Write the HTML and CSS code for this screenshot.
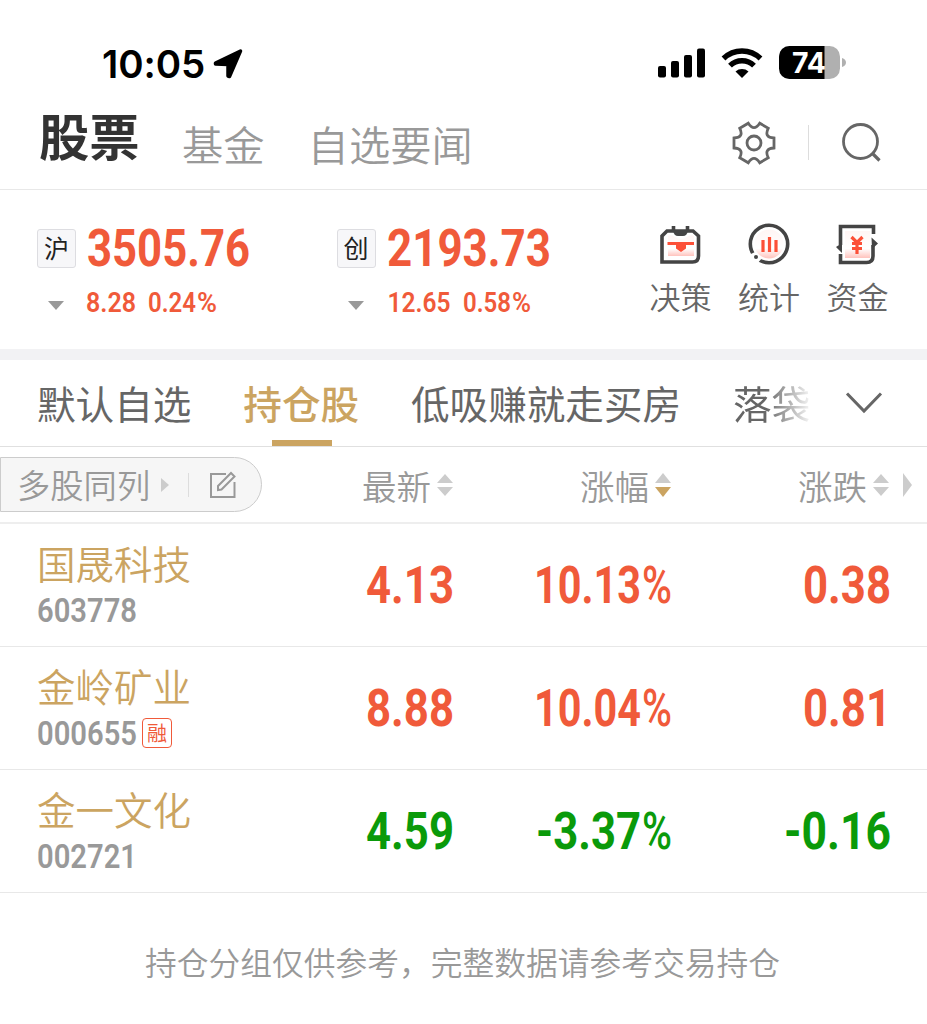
FILE: index.html
```html
<!DOCTYPE html>
<html lang="zh-CN">
<head>
<meta charset="utf-8">
<title>股票</title>
<link rel="stylesheet" href="styles.css">
</head>
<body>
<div class="status">
  <span class="time">10:05</span>
  <svg class="locate" width="32" height="32" viewBox="0 0 32 32"><path d="M28.500 3L17.500 28.500L16 28V16.500L3.500 16V15Z"/></svg>
  <svg class="signal" width="48" height="30" viewBox="0 0 48 30"><rect x="0" y="18" width="8" height="11.500" rx="2"/><rect x="13" y="13" width="8" height="16.500" rx="2"/><rect x="26" y="7" width="8" height="22.500" rx="2"/><rect x="39" y="0.500" width="8" height="29" rx="2"/></svg>
  <svg class="wifi" width="42" height="32" viewBox="0 0 42 32"><path d="M2.500 11.500A26.500 26.500 0 0 1 39.500 11.500M9 18.700A17 17 0 0 1 33 18.700" fill="none" stroke="#000" stroke-width="5.400"/><path d="M14.500 24.500A10 10 0 0 1 27.500 24.500L21 31Z"/></svg>
  <svg class="battery" width="68" height="34" viewBox="0 0 68 34"><defs><clipPath id="cell"><rect width="61" height="33" rx="10.500"/></clipPath></defs><g clip-path="url(#cell)"><rect width="61" height="33" fill="#b0b0b0"/><rect width="45.500" height="33"/></g><path d="M63 12C68.300 13 68.300 20 63 21Z" fill="#b0b0b0"/><text x="13" y="27" textLength="34" lengthAdjust="spacingAndGlyphs">74</text></svg>
</div>
<nav class="nav">
  <span class="nav-main">股票</span>
  <span class="nav-item">基金</span>
  <span class="nav-item">自选要闻</span>
  <svg class="gear" width="46" height="46" viewBox="-23 -23 46 46"><path d="M20-5V5Q9.650 5.500 14.300 14.800L5.700 19.800Q0 11-5.700 19.800L-14.300 14.800Q-9.650 5.500-20 5V-5Q-9.650-5.500-14.300-14.800L-5.700-19.800Q0-11 5.700-19.800L14.300-14.800Q9.650-5.500 20-5Z"/><circle r="7"/></svg>
  <i class="nav-rule"></i>
  <svg class="search" width="42" height="42" viewBox="0 0 42 42"><circle cx="19.500" cy="19.500" r="17"/><path d="M31.500 31.500L38.500 38.500" stroke-width="3.200"/></svg>
</nav>
<section class="market">
  <div class="index">
    <b class="badge">沪</b>
    <svg class="quote" width="166" height="44"><text x="0" y="40" textLength="163" lengthAdjust="spacingAndGlyphs">3505.76</text></svg>
    <svg class="fall" width="18" height="10"><path d="M1 0H17L9 9Z"/></svg>
    <svg class="change" width="150" height="26"><text x="-1" y="23" textLength="50" lengthAdjust="spacingAndGlyphs">8.28</text><text x="61" y="23" textLength="48" lengthAdjust="spacingAndGlyphs">0.24</text><text x="110" y="23" textLength="20" lengthAdjust="spacingAndGlyphs">%</text></svg>
  </div>
  <div class="index">
    <b class="badge">创</b>
    <svg class="quote" width="166" height="44"><text x="0" y="40" textLength="164" lengthAdjust="spacingAndGlyphs">2193.73</text></svg>
    <svg class="fall" width="18" height="10"><path d="M1 0H17L9 9Z"/></svg>
    <svg class="change" width="150" height="26"><text x="0.500" y="23" textLength="63" lengthAdjust="spacingAndGlyphs">12.65</text><text x="76" y="23" textLength="48" lengthAdjust="spacingAndGlyphs">0.58</text><text x="125" y="23" textLength="19" lengthAdjust="spacingAndGlyphs">%</text></svg>
  </div>
  <div class="tools">
    <div class="tool">
      <svg width="44" height="44" viewBox="0 0 44 44"><defs><linearGradient id="pink" x2="0" y2="1"><stop offset="0" stop-color="#fff5f4"/><stop offset=".65" stop-color="#fff"/><stop offset="1" stop-color="#ffc3bd"/></linearGradient></defs><path d="M9 13Q12 11 16 14Q22 18 28 14Q32 11 35 13V33H9Z" fill="url(#pink)"/><path d="M3 39V13L8 8H34L39.500 13V33Q39.500 39 33.500 39Z" class="ink"/><path d="M14.500 3V8M28.500 3V8" class="ink"/><path d="M14 7.500H29Q28 13 24 13H19Q15 13 14 7.500Z" fill="#444"/><path d="M8.500 19H35V22H27V25.500L22 29L17 25.500V22H8.500Z" class="accent"/></svg>
      <span>决策</span>
    </div>
    <div class="tool">
      <svg width="44" height="44" viewBox="0 0 44 44"><circle cx="22" cy="21" r="14.500" fill="url(#pink)"/><circle cx="22" cy="21" r="18.700" class="ink"/><path d="M6 30L8 34L12.500 38" stroke="#fff" stroke-width="6" fill="none"/><circle cx="9" cy="34" r="2" fill="#444"/><path d="M16 17V29M22.500 14V29M29 17V29" stroke="#fc5038" stroke-width="3.200" fill="none"/></svg>
      <span>统计</span>
    </div>
    <div class="tool">
      <svg width="44" height="44" viewBox="0 0 44 44"><rect x="9" y="8" width="25" height="27" fill="url(#pink)"/><path d="M4.500 22V3.500H37.500V11M4.500 31V39.500H30.500Q37 39.500 37 33V22" class="ink"/><path d="M0 24L6 20V30ZM35.500 14.500L42 20.500L36 26Z" fill="#444"/><path d="M15.500 14L21 19.500L26.500 14M16 20.500H26M16 25.500H26M21 19V31" stroke="#fc5038" stroke-width="3.200" fill="none"/></svg>
      <span>资金</span>
    </div>
  </div>
</section>
<div class="tabs">
  <span class="tab">默认自选</span>
  <span class="tab active">持仓股</span>
  <span class="tab">低吸赚就走买房</span>
  <span class="tab cut">落袋为</span>
  <svg class="more" width="38" height="24"><path d="M2 2.500L19 20L36 2.500"/></svg>
</div>
<div class="grid head">
  <div class="multi">
    <span>多股同列</span>
    <svg class="play" width="8" height="14"><path d="M0 0L8 7L0 14Z"/></svg>
    <i></i>
    <svg class="edit" width="28" height="28" viewBox="0 0 28 28"><path d="M17 3H2V26H25.500V11"/><path d="M9 19V15L22 2L25.500 5.500L12.500 18.500Z"/></svg>
  </div>
  <div class="col">最新<svg class="sort" width="16" height="22"><path d="M0 9L8 0L16 9ZM0 13H16L8 22Z"/></svg></div>
  <div class="col">涨幅<svg class="sort" width="16" height="24"><path d="M0 10L8 0L16 10Z"/><path class="gold" d="M0 14H16L8 24Z"/></svg></div>
  <div class="col">涨跌<svg class="sort" width="16" height="22"><path d="M0 9L8 0L16 9ZM0 13H16L8 22Z"/></svg></div>
  <svg class="next" width="9" height="24"><path d="M0 0L9 12L0 24Z"/></svg>
</div>
<div class="grid row up">
  <div class="stock"><div class="name">国晟科技</div><div class="code"><svg width="101" height="28"><text x="0" y="25.500" textLength="100" lengthAdjust="spacingAndGlyphs">603778</text></svg></div></div>
  <svg class="val" width="150" height="44"><text x="63" y="39.500" textLength="88" lengthAdjust="spacingAndGlyphs">4.13</text></svg>
  <svg class="val" width="150" height="44"><text x="13" y="39.500" textLength="107" lengthAdjust="spacingAndGlyphs">10.13</text><text x="121" y="39.500" textLength="30" lengthAdjust="spacingAndGlyphs" class="pct">%</text></svg>
  <svg class="val" width="150" height="44"><text x="64" y="39.500" textLength="88" lengthAdjust="spacingAndGlyphs">0.38</text></svg>
</div>
<div class="grid row up">
  <div class="stock"><div class="name">金岭矿业</div><div class="code"><svg width="101" height="28"><text x="0" y="25.500" textLength="100" lengthAdjust="spacingAndGlyphs">000655</text></svg><b class="margin">融</b></div></div>
  <svg class="val" width="150" height="44"><text x="63" y="39.500" textLength="88" lengthAdjust="spacingAndGlyphs">8.88</text></svg>
  <svg class="val" width="150" height="44"><text x="13" y="39.500" textLength="107" lengthAdjust="spacingAndGlyphs">10.04</text><text x="121" y="39.500" textLength="30" lengthAdjust="spacingAndGlyphs" class="pct">%</text></svg>
  <svg class="val" width="150" height="44"><text x="64" y="39.500" textLength="88" lengthAdjust="spacingAndGlyphs">0.81</text></svg>
</div>
<div class="grid row down">
  <div class="stock"><div class="name">金一文化</div><div class="code"><svg width="101" height="28"><text x="0" y="25.500" textLength="100" lengthAdjust="spacingAndGlyphs">002721</text></svg></div></div>
  <svg class="val" width="150" height="44"><text x="63" y="39.500" textLength="88" lengthAdjust="spacingAndGlyphs">4.59</text></svg>
  <svg class="val" width="150" height="44"><text x="15" y="39.500" textLength="105" lengthAdjust="spacingAndGlyphs">-3.37</text><text x="121" y="39.500" textLength="30" lengthAdjust="spacingAndGlyphs" class="pct">%</text></svg>
  <svg class="val" width="150" height="44"><text x="45" y="39.500" textLength="107" lengthAdjust="spacingAndGlyphs">-0.16</text></svg>
</div>
<p class="note">持仓分组仅供参考，完整数据请参考交易持仓</p>
</body>
</html>
```
FILE: styles.css
```css
* { box-sizing: border-box; }
body {
  margin: 0;
  width: 927px;
  height: 1024px;
  overflow: hidden;
  background: #fff;
  color: #666;
  font-family: "Noto Sans CJK SC", sans-serif;
}
svg { display: block; flex: none; overflow: visible; }

.status { height: 100px; padding: 28px 80px 0 102px; display: flex; align-items: center; }
.time { width: 110px; font: 600 38.5px/72px Inter, sans-serif; color: #000; letter-spacing: -.1px; }
.locate { margin-top: -1px; stroke: #000; stroke-width: 3.500; stroke-linejoin: round; }
.signal { margin-left: 414px; margin-top: -3px; }
.wifi { margin-left: 15px; margin-top: -3px; }
.battery { margin-left: 16px; margin-top: -2px; }
.battery text { font: 700 29px Inter, sans-serif; fill: #fff; }

.nav { height: 90px; padding-left: 39px; display: flex; border-bottom: 1px solid #e8e8e8; }
.nav-main { width: 143px; font-size: 50.300px; font-weight: 700; line-height: 69px; color: #333; }
.nav-item { margin-right: 43px; font-size: 41.300px; line-height: 86px; color: #999; font-weight: 350; }
.gear { margin: 20px 0 0 215px; fill: none; stroke: #666; stroke-width: 2.8; }
.nav-rule { width: 1px; height: 35px; margin: 25px 32px 0 31px; background: #ddd; }
.search { margin-top: 22px; fill: none; stroke: #666; stroke-width: 2.8; }

.market { height: 170px; padding-left: 37px; display: flex; border-bottom: 11px solid #f2f2f4; }
.index { width: 299.500px; padding-top: 36px; display: grid; grid-template-columns: 38px 1fr; grid-template-rows: 53px 26px; column-gap: 12px; align-content: start; }
.badge { width: 39px; height: 39px; margin-top: 3px; border: 1px solid #dddde1; border-radius: 3px; background: #f7f7f9; color: #222; font-size: 25px; font-weight: 400; line-height: 35px; text-align: center; }
.quote text { font: 700 52px Roboto, sans-serif; fill: #f05a3a; }
.fall { margin: 22px 0 0 10px; fill: #999; }
.change { margin-top: 10px; }
.change text { font: 600 28.500px Roboto, sans-serif; fill: #f05a3a; }
.tools { display: flex; margin-left: 13.500px; gap: 26.500px; }
.tool { width: 62px; padding-top: 33px; font-size: 31px; font-weight: 350; display: flex; flex-direction: column; align-items: center; white-space: nowrap; gap: 7px; }
.tool span { line-height: 44px; }
.ink { fill: none; stroke: #444; stroke-width: 3.600; }
.accent { fill: #fc5038; }

.tabs { height: 87px; padding-left: 37px; display: flex; border-bottom: 1px solid #e0e0e0; font-size: 38.600px; line-height: 84px; white-space: nowrap; }
.tab { margin-right: 52px; height: 86px; font-weight: 400; }
.tab.active { color: #cba461; font-weight: 500; position: relative; }
.tab.active::after { content: ""; position: absolute; left: 29px; bottom: 0; width: 60px; height: 6px; background: #cba461; }
.tab.cut { width: 82px; margin-right: 30px; overflow: hidden; mask-image: linear-gradient(90deg, #000 40%, transparent 98%); }
.more { margin-top: 31px; fill: none; stroke: #666; stroke-width: 3; }

.grid { display: grid; grid-template-columns: 303px 150px 218px 218px 38px; align-items: center; justify-items: end; }
.head { height: 77px; border-bottom: 2px solid #eee; color: #999; font-size: 34.500px; font-weight: 350; }
.multi { justify-self: start; width: 262px; height: 55px; margin-top: 0; padding-left: 16px; display: flex; align-items: center; border: 1px solid #ccc; border-radius: 0 28px 28px 0; background: #f6f6f6; font-size: 33.300px; line-height: 50px; }
.multi span { width: 144px; margin-top: -1px; }
.play, .sort, .next { fill: #ccc; }
.multi i { width: 1px; height: 24px; margin: 0 20px 0 19px; background: #ddd; }
.edit { fill: none; stroke: #999; stroke-width: 2; }
.col { display: flex; align-items: center; gap: 6px; line-height: 70px; }
.sort .gold { fill: #cba461; }
.next { justify-self: start; margin-left: 14px; }

.row { height: 123px; border-bottom: 1px solid #e8e8e8; }
.stock { align-self: start; justify-self: start; padding: 16px 0 0 37px; }
.name { height: 54px; color: #cba461; font-size: 38.500px; font-weight: 350; line-height: 45px; }
.code { height: 32px; display: flex; align-items: center; gap: 4px; }
.code text { font: 600 34px Roboto, sans-serif; fill: #999; }
.margin { width: 30px; height: 30px; border: 1.500px solid #f05a3a; border-radius: 4px; color: #f05a3a; font-size: 20px; font-weight: 400; line-height: 27px; text-align: center; }
.val text { font: 700 51px Roboto, sans-serif; }
.val .pct { font-weight: 500; }
.up .val { fill: #f05a3a; }
.down .val { fill: #0a9a0a; }

.note { margin: 43px 0 0 145px; font-size: 31.750px; font-weight: 350; line-height: 50px; color: #999; }
```
